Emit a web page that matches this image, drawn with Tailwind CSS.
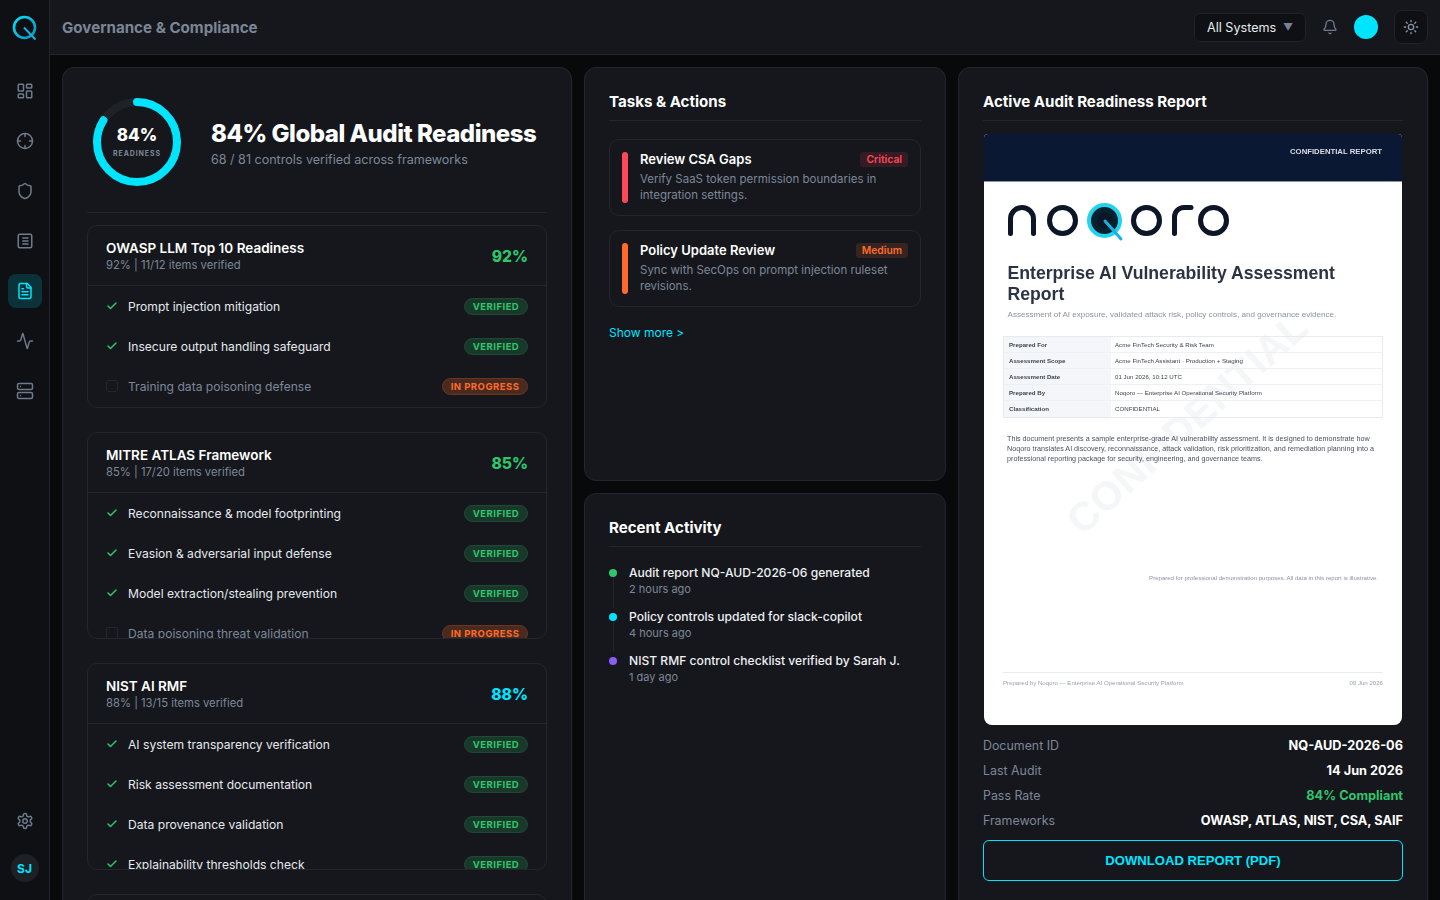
<!DOCTYPE html>
<html lang="en">
<head>
    <meta charset="UTF-8">
    <meta name="viewport" content="width=device-width, initial-scale=1.0">
    <title>Governance &amp; Compliance</title>
    <script src="https://cdn.jsdelivr.net/npm/@tailwindcss/browser@4"></script>
</head>
<body class="bg-[#08090b] h-screen overflow-hidden flex font-['Inter',sans-serif] text-[#f4f6f8]">
    <!-- sidebar -->
    <aside class="w-[50px] h-[900px] shrink-0 bg-[#0e1013] border-r border-[#22252b] flex flex-col items-center">
        <div class="h-[55px] w-full flex items-center justify-center">
            <svg width="26" height="26" viewBox="0 0 26 26" fill="none">
                <defs><linearGradient id="lg" x1="0" y1="0" x2="1" y2="1"><stop offset="0" stop-color="#00e5ff"/><stop offset="1" stop-color="#0a8fc4"/></linearGradient></defs>
                <circle cx="12.5" cy="12.5" r="10.5" stroke="url(#lg)" stroke-width="2.6"/>
                <path d="M12 12.5 L23.5 24.5" stroke="#0fb4dc" stroke-width="2"/>
            </svg>
        </div>
        <nav class="flex flex-col items-center pt-[19px] gap-4 text-[#6f7a8c]">
            <a class="w-[34px] h-[34px] flex items-center justify-center">
                <svg width="18" height="18" viewBox="0 0 24 24" fill="none" stroke="currentColor" stroke-width="2" stroke-linecap="round" stroke-linejoin="round"><rect x="3" y="3" width="7" height="9" rx="1"/><rect x="14" y="3" width="7" height="5" rx="1"/><rect x="14" y="12" width="7" height="9" rx="1"/><rect x="3" y="16" width="7" height="5" rx="1"/></svg>
            </a>
            <a class="w-[34px] h-[34px] flex items-center justify-center">
                <svg width="18" height="18" viewBox="0 0 24 24" fill="none" stroke="currentColor" stroke-width="2" stroke-linecap="round" stroke-linejoin="round"><circle cx="12" cy="12" r="10"/><path d="M22 12h-4M6 12H2M12 6V2M12 22v-4"/></svg>
            </a>
            <a class="w-[34px] h-[34px] flex items-center justify-center">
                <svg width="18" height="18" viewBox="0 0 24 24" fill="none" stroke="currentColor" stroke-width="2" stroke-linecap="round" stroke-linejoin="round"><path d="M20 13c0 5-3.5 7.5-7.66 8.95a1 1 0 0 1-.67-.01C7.5 20.5 4 18 4 13V6a1 1 0 0 1 1-1c2 0 4.5-1.2 6.24-2.72a1.17 1.17 0 0 1 1.52 0C14.51 3.81 17 5 19 5a1 1 0 0 1 1 1z"/></svg>
            </a>
            <a class="w-[34px] h-[34px] flex items-center justify-center">
                <svg width="18" height="18" viewBox="0 0 24 24" fill="none" stroke="currentColor" stroke-width="2" stroke-linecap="round" stroke-linejoin="round"><rect x="3" y="3" width="18" height="18" rx="2"/><path d="M9 8h7M9 12h7M9 16h7"/></svg>
            </a>
            <a class="w-[34px] h-[34px] rounded-lg bg-[#0b3238] text-[#00e5ff] flex items-center justify-center">
                <svg width="18" height="18" viewBox="0 0 24 24" fill="none" stroke="currentColor" stroke-width="2" stroke-linecap="round" stroke-linejoin="round"><path d="M15 2H6a2 2 0 0 0-2 2v16a2 2 0 0 0 2 2h12a2 2 0 0 0 2-2V7Z"/><path d="M14 2v4a2 2 0 0 0 2 2h4"/><path d="M10 9H8M16 13H8M16 17H8"/></svg>
            </a>
            <a class="w-[34px] h-[34px] flex items-center justify-center">
                <svg width="18" height="18" viewBox="0 0 24 24" fill="none" stroke="currentColor" stroke-width="2" stroke-linecap="round" stroke-linejoin="round"><path d="M22 12h-2.48a2 2 0 0 0-1.93 1.46l-2.35 8.36a.25.25 0 0 1-.48 0L9.24 2.18a.25.25 0 0 0-.48 0l-2.35 8.36A2 2 0 0 1 4.49 12H2"/></svg>
            </a>
            <a class="w-[34px] h-[34px] flex items-center justify-center">
                <svg width="18" height="18" viewBox="0 0 24 24" fill="none" stroke="currentColor" stroke-width="2" stroke-linecap="round" stroke-linejoin="round"><rect x="2" y="2" width="20" height="8" rx="2"/><rect x="2" y="14" width="20" height="8" rx="2"/><path d="M6 6h.01M6 18h.01"/></svg>
            </a>
        </nav>
        <div class="mt-auto pb-[18px] flex flex-col items-center gap-[24px] text-[#6f7a8c]">
            <svg width="18" height="18" viewBox="0 0 24 24" fill="none" stroke="currentColor" stroke-width="2" stroke-linecap="round" stroke-linejoin="round"><path d="M12.22 2h-.44a2 2 0 0 0-2 2v.18a2 2 0 0 1-1 1.73l-.43.25a2 2 0 0 1-2 0l-.15-.08a2 2 0 0 0-2.73.73l-.22.38a2 2 0 0 0 .73 2.73l.15.1a2 2 0 0 1 1 1.72v.51a2 2 0 0 1-1 1.74l-.15.09a2 2 0 0 0-.73 2.73l.22.38a2 2 0 0 0 2.73.73l.15-.08a2 2 0 0 1 2 0l.43.25a2 2 0 0 1 1 1.73V20a2 2 0 0 0 2 2h.44a2 2 0 0 0 2-2v-.18a2 2 0 0 1 1-1.73l.43-.25a2 2 0 0 1 2 0l.15.08a2 2 0 0 0 2.73-.73l.22-.39a2 2 0 0 0-.73-2.73l-.15-.08a2 2 0 0 1-1-1.74v-.5a2 2 0 0 1 1-1.74l.15-.09a2 2 0 0 0 .73-2.73l-.22-.38a2 2 0 0 0-2.73-.73l-.15.08a2 2 0 0 1-2 0l-.43-.25a2 2 0 0 1-1-1.73V4a2 2 0 0 0-2-2z"/><circle cx="12" cy="12" r="3"/></svg>
            <div class="w-[28px] h-[28px] pt-[2px] rounded-full bg-[#1d2126] text-[#00e5ff] text-[12px] font-bold flex items-center justify-center">SJ</div>
        </div>
    </aside>

    <div class="flex-1 min-w-0 flex flex-col h-[900px]">
        <!-- top bar -->
        <header class="h-[55px] shrink-0 bg-[#15171c] border-b border-[#23262c] flex items-center pl-3 pr-3">
            <h1 class="pt-[2px] text-[15.15px] font-bold text-[#7b8696]">Governance &amp; Compliance</h1>
            <div class="ml-auto flex items-center">
                <div class="w-[112px] h-[29px] rounded-md bg-[#0e1013] border border-[#1f2228] flex items-center pl-3 pr-3 justify-between">
                    <span class="mt-[2px] text-[12.6px] text-[#e8ebef]">All Systems</span>
                    <span class="pt-px text-[10px] text-[#77818f]">▼</span>
                </div>
                <svg class="ml-4" width="16" height="16" viewBox="0 0 24 24" fill="none" stroke="#6f7a8c" stroke-width="2" stroke-linecap="round" stroke-linejoin="round"><path d="M10.268 21a2 2 0 0 0 3.464 0"/><path d="M3.262 15.326A1 1 0 0 0 4 17h16a1 1 0 0 0 .74-1.673C19.41 13.956 18 12.499 18 8A6 6 0 0 0 6 8c0 4.499-1.411 5.956-2.738 7.326"/></svg>
                <div class="ml-4 w-6 h-6 rounded-full bg-[#00e5ff]"></div>
                <div class="ml-4 w-[34px] h-[34px] rounded-lg bg-[#0e1013] border border-[#1f2228] flex items-center justify-center">
                    <svg width="16" height="16" viewBox="0 0 24 24" fill="none" stroke="#8a94a3" stroke-width="2" stroke-linecap="round" stroke-linejoin="round"><circle cx="12" cy="12" r="4"/><path d="M12 2v2M12 20v2M4.93 4.93l1.41 1.41M17.66 17.66l1.41 1.41M2 12h2M20 12h2M6.34 17.66l-1.41 1.41M19.07 4.93l-1.41 1.41"/></svg>
                </div>
            </div>
        </header>

        <main class="flex-1 min-h-0 overflow-hidden flex items-start gap-3 pl-3 pr-3 pt-3">
            <!-- left column -->
            <section class="w-[510px] h-[900px] shrink-0 rounded-xl bg-[#15171c] border border-[#23262c] p-6">
                <div class="flex items-center pl-[6px] pt-[6px] pb-[26px] border-b border-[#23262c] gap-[30px]">
                    <div class="relative w-[88px] h-[88px] shrink-0">
                        <svg class="-rotate-90" width="88" height="88" viewBox="0 0 88 88" fill="none">
                            <circle cx="44" cy="44" r="40" stroke="#1f2328" stroke-width="8"/>
                            <circle cx="44" cy="44" r="40" stroke="#00e5ff" stroke-width="8" stroke-linecap="round" stroke-dasharray="211.1 251.3"/>
                        </svg>
                        <div class="absolute inset-0 pb-[2px] flex flex-col items-center justify-center">
                            <span class="text-[17px] leading-[20px] font-extrabold text-white">84%</span>
                            <span class="mt-[4px] text-[7px] leading-[9px] font-bold tracking-[0.13em] text-[#7d8799]">READINESS</span>
                        </div>
                    </div>
                    <div class="pt-[2px]">
                        <h2 class="text-[24px] leading-[32px] font-extrabold text-white tracking-[-0.02em]">84% Global Audit Readiness</h2>
                        <p class="mt-px text-[12.55px] leading-[18px] text-[#7d8799]">68 / 81 controls verified across frameworks</p>
                    </div>
                </div>

                <div class="mt-3 flex flex-col gap-6">
                    <!-- OWASP -->
                    <div class="rounded-[10px] border border-[#23262c] pb-px overflow-hidden">
                        <div class="h-[60px] border-b border-[#23262c] flex items-center justify-between px-[18px]">
                            <div>
                                <div class="text-[13.5px] leading-[18px] font-semibold text-white">OWASP LLM Top 10 Readiness</div>
                                <div class="text-[11.25px] leading-[16px] text-[#7d8799]">92% | 11/12 items verified</div>
                            </div>
                            <div class="pt-[2px] text-[15.6px] font-extrabold text-[#2fc56d]">92%</div>
                        </div>
                        <div class="h-10 flex items-center px-[18px]">
                            <svg class="w-3 h-3 text-[#2fc56d]" viewBox="0 0 24 24" fill="none" stroke="currentColor" stroke-width="3" stroke-linecap="round" stroke-linejoin="round"><path d="M20 6 9 17l-5-5"/></svg>
                            <span class="ml-[10px] mt-[2px] text-[12.1px] text-[#e6e9ed]">Prompt injection mitigation</span>
                            <span class="ml-auto w-[64px] justify-center h-[17px] pt-[2px] rounded-full bg-[#18392a] border border-[#1f4a35] text-[#2fc56d] text-[9.5px] font-bold tracking-[0.05em] flex items-center">VERIFIED</span>
                        </div>
                        <div class="h-10 flex items-center px-[18px]">
                            <svg class="w-3 h-3 text-[#2fc56d]" viewBox="0 0 24 24" fill="none" stroke="currentColor" stroke-width="3" stroke-linecap="round" stroke-linejoin="round"><path d="M20 6 9 17l-5-5"/></svg>
                            <span class="ml-[10px] mt-[2px] text-[12.1px] text-[#e6e9ed]">Insecure output handling safeguard</span>
                            <span class="ml-auto w-[64px] justify-center h-[17px] pt-[2px] rounded-full bg-[#18392a] border border-[#1f4a35] text-[#2fc56d] text-[9.5px] font-bold tracking-[0.05em] flex items-center">VERIFIED</span>
                        </div>
                        <div class="h-10 flex items-center px-[18px]">
                            <span class="w-3 h-3 rounded-[2px] border border-[#23262c]"></span>
                            <span class="ml-[10px] mt-[2px] text-[12.1px] text-[#7d8799]">Training data poisoning defense</span>
                            <span class="ml-auto w-[86px] justify-center h-[17px] pt-[2px] rounded-full bg-[#4a2a1e] border border-[#6a3620] text-[#ff6b2c] text-[9.5px] font-bold tracking-[0.05em] flex items-center">IN PROGRESS</span>
                        </div>
                    </div>

                    <!-- MITRE -->
                    <div class="rounded-[10px] border border-[#23262c] h-[207px] overflow-hidden">
                        <div class="h-[60px] border-b border-[#23262c] flex items-center justify-between px-[18px]">
                            <div>
                                <div class="text-[13.5px] leading-[18px] font-semibold text-white">MITRE ATLAS Framework</div>
                                <div class="text-[11.25px] leading-[16px] text-[#7d8799]">85% | 17/20 items verified</div>
                            </div>
                            <div class="pt-[2px] text-[15.6px] font-extrabold text-[#2fc56d]">85%</div>
                        </div>
                        <div class="h-10 flex items-center px-[18px]">
                            <svg class="w-3 h-3 text-[#2fc56d]" viewBox="0 0 24 24" fill="none" stroke="currentColor" stroke-width="3" stroke-linecap="round" stroke-linejoin="round"><path d="M20 6 9 17l-5-5"/></svg>
                            <span class="ml-[10px] mt-[2px] text-[12.1px] text-[#e6e9ed]">Reconnaissance &amp; model footprinting</span>
                            <span class="ml-auto w-[64px] justify-center h-[17px] pt-[2px] rounded-full bg-[#18392a] border border-[#1f4a35] text-[#2fc56d] text-[9.5px] font-bold tracking-[0.05em] flex items-center">VERIFIED</span>
                        </div>
                        <div class="h-10 flex items-center px-[18px]">
                            <svg class="w-3 h-3 text-[#2fc56d]" viewBox="0 0 24 24" fill="none" stroke="currentColor" stroke-width="3" stroke-linecap="round" stroke-linejoin="round"><path d="M20 6 9 17l-5-5"/></svg>
                            <span class="ml-[10px] mt-[2px] text-[12.1px] text-[#e6e9ed]">Evasion &amp; adversarial input defense</span>
                            <span class="ml-auto w-[64px] justify-center h-[17px] pt-[2px] rounded-full bg-[#18392a] border border-[#1f4a35] text-[#2fc56d] text-[9.5px] font-bold tracking-[0.05em] flex items-center">VERIFIED</span>
                        </div>
                        <div class="h-10 flex items-center px-[18px]">
                            <svg class="w-3 h-3 text-[#2fc56d]" viewBox="0 0 24 24" fill="none" stroke="currentColor" stroke-width="3" stroke-linecap="round" stroke-linejoin="round"><path d="M20 6 9 17l-5-5"/></svg>
                            <span class="ml-[10px] mt-[2px] text-[12.1px] text-[#e6e9ed]">Model extraction/stealing prevention</span>
                            <span class="ml-auto w-[64px] justify-center h-[17px] pt-[2px] rounded-full bg-[#18392a] border border-[#1f4a35] text-[#2fc56d] text-[9.5px] font-bold tracking-[0.05em] flex items-center">VERIFIED</span>
                        </div>
                        <div class="h-10 flex items-center px-[18px]">
                            <span class="w-3 h-3 rounded-[2px] border border-[#23262c]"></span>
                            <span class="ml-[10px] mt-[2px] text-[12.1px] text-[#7d8799]">Data poisoning threat validation</span>
                            <span class="ml-auto w-[86px] justify-center h-[17px] pt-[2px] rounded-full bg-[#4a2a1e] border border-[#6a3620] text-[#ff6b2c] text-[9.5px] font-bold tracking-[0.05em] flex items-center">IN PROGRESS</span>
                        </div>
                    </div>

                    <!-- NIST -->
                    <div class="rounded-[10px] border border-[#23262c] h-[207px] overflow-hidden">
                        <div class="h-[60px] border-b border-[#23262c] flex items-center justify-between px-[18px]">
                            <div>
                                <div class="text-[13.5px] leading-[18px] font-semibold text-white">NIST AI RMF</div>
                                <div class="text-[11.25px] leading-[16px] text-[#7d8799]">88% | 13/15 items verified</div>
                            </div>
                            <div class="pt-[2px] text-[15.6px] font-extrabold text-[#00e5ff]">88%</div>
                        </div>
                        <div class="h-10 flex items-center px-[18px]">
                            <svg class="w-3 h-3 text-[#2fc56d]" viewBox="0 0 24 24" fill="none" stroke="currentColor" stroke-width="3" stroke-linecap="round" stroke-linejoin="round"><path d="M20 6 9 17l-5-5"/></svg>
                            <span class="ml-[10px] mt-[2px] text-[12.1px] text-[#e6e9ed]">AI system transparency verification</span>
                            <span class="ml-auto w-[64px] justify-center h-[17px] pt-[2px] rounded-full bg-[#18392a] border border-[#1f4a35] text-[#2fc56d] text-[9.5px] font-bold tracking-[0.05em] flex items-center">VERIFIED</span>
                        </div>
                        <div class="h-10 flex items-center px-[18px]">
                            <svg class="w-3 h-3 text-[#2fc56d]" viewBox="0 0 24 24" fill="none" stroke="currentColor" stroke-width="3" stroke-linecap="round" stroke-linejoin="round"><path d="M20 6 9 17l-5-5"/></svg>
                            <span class="ml-[10px] mt-[2px] text-[12.1px] text-[#e6e9ed]">Risk assessment documentation</span>
                            <span class="ml-auto w-[64px] justify-center h-[17px] pt-[2px] rounded-full bg-[#18392a] border border-[#1f4a35] text-[#2fc56d] text-[9.5px] font-bold tracking-[0.05em] flex items-center">VERIFIED</span>
                        </div>
                        <div class="h-10 flex items-center px-[18px]">
                            <svg class="w-3 h-3 text-[#2fc56d]" viewBox="0 0 24 24" fill="none" stroke="currentColor" stroke-width="3" stroke-linecap="round" stroke-linejoin="round"><path d="M20 6 9 17l-5-5"/></svg>
                            <span class="ml-[10px] mt-[2px] text-[12.1px] text-[#e6e9ed]">Data provenance validation</span>
                            <span class="ml-auto w-[64px] justify-center h-[17px] pt-[2px] rounded-full bg-[#18392a] border border-[#1f4a35] text-[#2fc56d] text-[9.5px] font-bold tracking-[0.05em] flex items-center">VERIFIED</span>
                        </div>
                        <div class="h-10 flex items-center px-[18px]">
                            <svg class="w-3 h-3 text-[#2fc56d]" viewBox="0 0 24 24" fill="none" stroke="currentColor" stroke-width="3" stroke-linecap="round" stroke-linejoin="round"><path d="M20 6 9 17l-5-5"/></svg>
                            <span class="ml-[10px] mt-[2px] text-[12.1px] text-[#e6e9ed]">Explainability thresholds check</span>
                            <span class="ml-auto w-[64px] justify-center h-[17px] pt-[2px] rounded-full bg-[#18392a] border border-[#1f4a35] text-[#2fc56d] text-[9.5px] font-bold tracking-[0.05em] flex items-center">VERIFIED</span>
                        </div>
                    </div>

                    <div class="rounded-[10px] border border-[#23262c] h-[207px]"></div>
                </div>
            </section>

            <!-- middle column -->
            <div class="w-[362px] shrink-0 flex flex-col gap-3">
                <section class="h-[414px] rounded-xl bg-[#15171c] border border-[#23262c] px-6 pt-6">
                    <h3 class="h-[29px] pt-px border-b border-[#23262c] text-[15.1px] leading-[18px] font-bold text-white">Tasks &amp; Actions</h3>
                    <div class="mt-[18px] flex flex-col gap-[14px]">
                        <div class="h-[77px] rounded-[10px] border border-[#23262c] flex pl-3 pr-3 pt-3">
                            <span class="w-[6px] h-[51px] rounded-full bg-[#ff4757] shrink-0"></span>
                            <div class="ml-3 flex-1 min-w-0">
                                <div class="flex items-start justify-between">
                                    <span class="text-[13px] leading-[15px] font-semibold text-white">Review CSA Gaps</span>
                                    <span class="h-[15px] px-[6px] rounded-[3px] bg-[#351c24] text-[#ff4757] text-[10.3px] leading-[15px] font-semibold">Critical</span>
                                </div>
                                <p class="mt-[4px] text-[11.5px] leading-[16px] text-[#7d8799]">Verify SaaS token permission boundaries in integration settings.</p>
                            </div>
                        </div>
                        <div class="h-[77px] rounded-[10px] border border-[#23262c] flex pl-3 pr-3 pt-3">
                            <span class="w-[6px] h-[51px] rounded-full bg-[#ff6b2c] shrink-0"></span>
                            <div class="ml-3 flex-1 min-w-0">
                                <div class="flex items-start justify-between">
                                    <span class="text-[13px] leading-[15px] font-semibold text-white">Policy Update Review</span>
                                    <span class="h-[15px] px-[6px] rounded-[3px] bg-[#362420] text-[#ff6b2c] text-[10.3px] leading-[15px] font-semibold">Medium</span>
                                </div>
                                <p class="mt-[4px] text-[11.5px] leading-[16px] text-[#7d8799]">Sync with SecOps on prompt injection ruleset revisions.</p>
                            </div>
                        </div>
                    </div>
                    <a class="block mt-[14px] text-[12px] leading-[24px] text-[#00e5ff]">Show more &gt;</a>
                </section>

                <section class="h-[500px] rounded-xl bg-[#15171c] border border-[#23262c] px-6 pt-6">
                    <h3 class="h-[29px] pt-px border-b border-[#23262c] text-[15.1px] leading-[18px] font-bold text-white">Recent Activity</h3>
                    <div class="mt-[17px]">
                        <div class="flex h-[44px]">
                            <div class="w-[8px] mr-3 flex flex-col items-center pt-[5px]">
                                <span class="w-2 h-2 rounded-full bg-[#2fc56d] shrink-0"></span>
                                <span class="w-px flex-1 bg-[#23262c]"></span>
                            </div>
                            <div>
                                <div class="text-[12.1px] leading-[17px] font-medium text-[#eef0f3]">Audit report NQ-AUD-2026-06 generated</div>
                                <div class="text-[11px] leading-[16px] text-[#7d8799]">2 hours ago</div>
                            </div>
                        </div>
                        <div class="flex h-[44px]">
                            <div class="w-[8px] mr-3 flex flex-col items-center pt-[5px]">
                                <span class="w-2 h-2 rounded-full bg-[#00e5ff] shrink-0"></span>
                                <span class="w-px flex-1 bg-[#23262c]"></span>
                            </div>
                            <div>
                                <div class="text-[12.1px] leading-[17px] font-medium text-[#eef0f3]">Policy controls updated for slack-copilot</div>
                                <div class="text-[11px] leading-[16px] text-[#7d8799]">4 hours ago</div>
                            </div>
                        </div>
                        <div class="flex h-[44px]">
                            <div class="w-[8px] mr-3 flex flex-col items-center pt-[5px]">
                                <span class="w-2 h-2 rounded-full bg-[#8b5cf6] shrink-0"></span>
                            </div>
                            <div>
                                <div class="text-[12.1px] leading-[17px] font-medium text-[#eef0f3]">NIST RMF control checklist verified by Sarah J.</div>
                                <div class="text-[11px] leading-[16px] text-[#7d8799]">1 day ago</div>
                            </div>
                        </div>
                    </div>
                </section>
            </div>

            <!-- right column -->
            <section class="w-[470px] h-[900px] shrink-0 rounded-xl bg-[#15171c] border border-[#23262c] px-6 pt-6">
                <h3 class="h-[29px] pt-px border-b border-[#23262c] text-[15.1px] leading-[18px] font-bold text-white">Active Audit Readiness Report</h3>

                <div class="relative mt-[13px] ml-px w-[418px] h-[591px] rounded-b-lg rounded-t-[4px] bg-white overflow-hidden font-['Liberation_Sans',sans-serif]">
                    <div class="blur-[0.3px] h-[48px] bg-[#0b1833] border-b border-[#8a93a6] pt-[13px] pr-[20px] text-right text-[7.75px] leading-[9px] font-bold text-[#d8dde5]">CONFIDENTIAL REPORT</div>
                    <!-- watermark -->
                    <div class="absolute left-[203px] top-[289px] -translate-x-1/2 -translate-y-1/2 -rotate-[42deg] text-[40px] leading-[44px] font-bold tracking-[0.02em] text-[#f5f6f8] whitespace-nowrap">CONFIDENTIAL</div>
                    <div class="relative px-[19px] blur-[0.3px]">
                        <svg class="mt-[21px] ml-[5px] block" width="224" height="40" viewBox="0 0 224 40" fill="none" stroke="#0c1626" stroke-width="5" stroke-linecap="round">
                            <path d="M2.5 30.5V16A11.5 11.5 0 0 1 25.5 16V30.5"/>
                            <circle cx="54.5" cy="17.5" r="13"/>
                            <circle cx="96.5" cy="17.5" r="15.5" fill="#04222f" stroke="#22d3ee" stroke-width="4"/>
                            <circle cx="96.5" cy="17.5" r="8" fill="#0c1626" stroke="none"/>
                            <path d="M97 18 L113 36" stroke="#12b5e0" stroke-width="3"/>
                            <circle cx="138.5" cy="17.5" r="13"/>
                            <path d="M166.5 30.5V14A9.5 9.5 0 0 1 176 4.5H183"/>
                            <circle cx="205.5" cy="17.5" r="13"/>
                        </svg>
                        <h4 class="mt-[20px] ml-[4.5px] text-[17.65px] leading-[21px] font-bold text-[#2b3445]">Enterprise AI Vulnerability Assessment<br>Report</h4>
                        <p class="mt-[4px] ml-[4.5px] text-[8.1px] leading-[12px] text-[#8c93a3]">Assessment of AI exposure, validated attack risk, policy controls, and governance evidence.</p>
                        <div class="mt-[15px] border border-[#e7eaf1] text-[6.15px] leading-[16px] text-[#3c4352]">
                            <div class="flex h-[16px] border-b border-[#eef0f5]"><div class="w-[107px] pl-[5px] bg-[#f5f6fa] font-bold">Prepared For</div><div class="pl-[4px]">Acme FinTech Security &amp; Risk Team</div></div>
                            <div class="flex h-[16px] border-b border-[#eef0f5]"><div class="w-[107px] pl-[5px] bg-[#f5f6fa] font-bold">Assessment Scope</div><div class="pl-[4px]">Acme FinTech Assistant · Production + Staging</div></div>
                            <div class="flex h-[16px] border-b border-[#eef0f5]"><div class="w-[107px] pl-[5px] bg-[#f5f6fa] font-bold">Assessment Date</div><div class="pl-[4px]">01 Jun 2026, 10:12 UTC</div></div>
                            <div class="flex h-[16px] border-b border-[#eef0f5]"><div class="w-[107px] pl-[5px] bg-[#f5f6fa] font-bold">Prepared By</div><div class="pl-[4px]">Noqoro — Enterprise AI Operational Security Platform</div></div>
                            <div class="flex h-[16px]"><div class="w-[107px] pl-[5px] bg-[#f5f6fa] font-bold">Classification</div><div class="pl-[4px]">CONFIDENTIAL</div></div>
                        </div>
                        <p class="mt-[16px] mx-[4px] text-[7.2px] leading-[10.2px] text-[#4a5160]">This document presents a sample enterprise-grade AI vulnerability assessment. It is designed to demonstrate how Noqoro translates AI discovery, reconnaissance, attack validation, risk prioritization, and remediation planning into a professional reporting package for security, engineering, and governance teams.</p>
                        <p class="mt-[109px] pr-[5px] text-right text-[6.05px] leading-[8px] text-[#8c93a3]">Prepared for professional demonstration purposes. All data in this report is illustrative.</p>
                        <div class="mt-[90px] border-t border-[#e7eaf1] pt-[6px] flex justify-between text-[6.1px] leading-[8px] text-[#9aa1af]">
                            <span>Prepared by Noqoro — Enterprise AI Operational Security Platform</span>
                            <span>09 Jun 2026</span>
                        </div>
                    </div>
                </div>

                <div class="mt-2">
                    <div class="h-[25px] flex items-center justify-between"><span class="mt-[2px] text-[12.4px] text-[#7d8799]">Document ID</span><span class="text-[12.75px] font-bold text-white">NQ-AUD-2026-06</span></div>
                    <div class="h-[25px] flex items-center justify-between"><span class="mt-[2px] text-[12.4px] text-[#7d8799]">Last Audit</span><span class="text-[12.75px] font-bold text-white">14 Jun 2026</span></div>
                    <div class="h-[25px] flex items-center justify-between"><span class="mt-[2px] text-[12.4px] text-[#7d8799]">Pass Rate</span><span class="text-[12.75px] font-bold text-[#2fc56d]">84% Compliant</span></div>
                    <div class="h-[25px] flex items-center justify-between"><span class="mt-[2px] text-[12.4px] text-[#7d8799]">Frameworks</span><span class="text-[12.75px] font-bold text-white">OWASP, ATLAS, NIST, CSA, SAIF</span></div>
                </div>
                <button class="mt-[7px] w-full h-[41px] rounded-md border border-[#00e5ff] text-[#00e5ff] text-[13.1px] font-bold font-['Liberation_Sans',sans-serif]">DOWNLOAD REPORT (PDF)</button>
            </section>
        </main>
    </div>
</body>
</html>
